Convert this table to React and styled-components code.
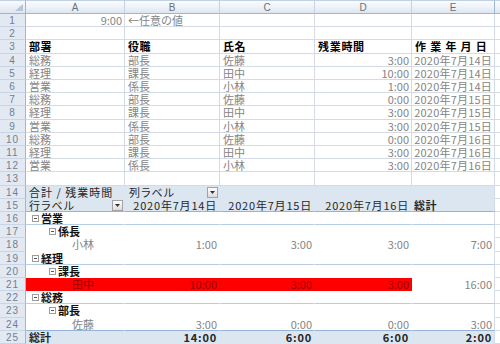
import React from 'react';
import styled, { createGlobalStyle } from 'styled-components';

const GRID = '#d4dbe6';
const PBLUE = '#dce6f1';
const PLINE = '#95b3d7';
const PLINE2 = '#b8cce4';
const RED = '#ff0000';
const WHITE = '#ffffff';

const ROW_HEIGHTS = Array.from(
  { length: 25 },
  (_, i) => Math.round((i + 1) * 13.2) - Math.round(i * 13.2)
);

const GlobalStyle = createGlobalStyle`
  html, body { margin: 0; padding: 0; background: #fff; }
  body { font-family: "Noto Sans CJK JP", "Noto Sans", sans-serif; overflow: hidden; }
`;

const Sheet = styled.div`
  display: grid;
  grid-template-columns: 26px 99px 95px 95px 97px 83px 1fr;
  grid-template-rows: 14px ${ROW_HEIGHTS.map((h) => `${h}px`).join(' ')};
  width: 500px;
  height: 344px;
  overflow: hidden;
  background: #fff;
`;

const Corner = styled.div`
  box-sizing: border-box;
  display: flex;
  align-items: flex-end;
  justify-content: flex-end;
  padding: 0 2px 2px 0;
  background: linear-gradient(#f8fafd, #dfe6f0);
  border-top: 1px solid #c3d0df;
  border-right: 1px solid #9eb6ce;
  border-bottom: 1px solid #9eb6ce;
`;

const ColHead = styled.div`
  box-sizing: border-box;
  display: flex;
  align-items: center;
  justify-content: center;
  background: linear-gradient(#f9fbfe 0%, #eef3f9 50%, #dde5f0 100%);
  border-top: 1px solid #c3d0df;
  border-right: 1px solid ${(p) => (p.$last ? '#9eb6ce' : '#c5d2e3')};
  border-bottom: 1px solid #9eb6ce;
  font: 10px "Liberation Sans", Arial, sans-serif;
  color: #707070;
`;

const RowHead = styled.div`
  box-sizing: border-box;
  display: flex;
  align-items: center;
  justify-content: center;
  background: #e2e9f3;
  border-right: 1px solid #9eb6ce;
  border-bottom: 1px solid #c9d5e4;
  font: 10px "Liberation Sans", Arial, sans-serif;
  letter-spacing: 1px;
  color: #71808f;
`;

const Cell = styled.div`
  box-sizing: border-box;
  display: flex;
  align-items: center;
  justify-content: ${(p) => (p.$align === 'right' ? 'flex-end' : 'flex-start')};
  padding: 0 ${(p) => p.$pr ?? 2}px 0 ${(p) => p.$indent ?? 3}px;
  background: ${(p) => p.$fill || WHITE};
  border-right: 1px solid ${(p) => p.$rc || GRID};
  border-bottom: 1px solid ${(p) => p.$bc || GRID};
  font-size: ${(p) => p.$size || 11}px;
  font-weight: ${(p) => (p.$bold ? 700 : 400)};
  color: ${(p) => p.$color || '#858585'};
  letter-spacing: ${(p) => p.$ls ?? 0}px;
  white-space: nowrap;
  line-height: 1;
  min-width: 0;
`;

const Label = styled.span`
  font-feature-settings: "palt";
`;

const DropBtn = styled.span`
  box-sizing: border-box;
  margin-left: auto;
  width: 11px;
  height: 11px;
  display: flex;
  align-items: center;
  justify-content: center;
  border: 1px solid #a3a3a3;
  background: linear-gradient(#fdfdfd, #dcdcdc);
`;

const GroupLabel = styled.span`
  display: inline-flex;
  align-items: center;
  gap: 2px;
  font-weight: 700;
  color: #111;
`;

const Triangle = () => (
  <svg width="8" height="7" viewBox="0 0 8 7">
    <path d="M8 0V7H0Z" fill="#b6c4d6" />
  </svg>
);

const Drop = () => (
  <DropBtn>
    <svg width="5" height="3" viewBox="0 0 5 3">
      <path d="M0 0h5L2.5 3z" fill="#333" />
    </svg>
  </DropBtn>
);

const Toggle = () => (
  <svg width="7" height="7" viewBox="0 0 7 7">
    <rect x="0.5" y="0.5" width="6" height="6" fill="#fff" stroke="#9c9c9c" />
    <path d="M2 3.5h3" stroke="#555" />
  </svg>
);

const group = (text) => (
  <GroupLabel>
    <Toggle />
    {text}
  </GroupLabel>
);

const COLS = ['A', 'B', 'C', 'D', 'E', ''];
const R = 'right';

const header = (t, ls = 0.5) => ({ t, bold: true, color: '#000', ls });
const dataRow = (a, b, c, d, e) => [
  { t: a },
  { t: b },
  { t: c },
  { t: d, align: R },
  { t: e, align: R, ls: 0.2 },
];

// pivot row: row-level fill and bottom line, cells A-E
const pv = (cells, fill = WHITE, bc = WHITE) =>
  [0, 1, 2, 3, 4].map((i) => {
    const c = cells[i] || {};
    const f = c.fill || fill;
    return {
      ...c,
      fill: f,
      rc: i === 4 ? GRID : f,
      bc: c.bc || bc,
    };
  });

const HEAD_COLOR = '#262626';
const DARK_RED = '#990000';
const ph = (t, extra = {}) => ({ t, size: 11, color: HEAD_COLOR, ls: 1, ...extra });

const ROWS = [
  [{ t: '9:00', align: R }, { t: '←任意の値' }],
  [],
  [header('部署'), header('役職'), header('氏名'), header('残業時間', 0.7), header('作業年月日', 4.2)],
  dataRow('総務', '部長', '佐藤', '3:00', '2020年7月14日'),
  dataRow('経理', '課長', '田中', '10:00', '2020年7月14日'),
  dataRow('営業', '係長', '小林', '1:00', '2020年7月14日'),
  dataRow('総務', '部長', '佐藤', '0:00', '2020年7月15日'),
  dataRow('経理', '課長', '田中', '3:00', '2020年7月15日'),
  dataRow('営業', '係長', '小林', '3:00', '2020年7月15日'),
  dataRow('総務', '部長', '佐藤', '0:00', '2020年7月16日'),
  dataRow('経理', '課長', '田中', '3:00', '2020年7月16日'),
  dataRow('営業', '係長', '小林', '3:00', '2020年7月16日'),
  [],
  pv(
    [
      ph(<Label>合計 / 残業時間</Label>),
      ph(<><Label>列ラベル</Label><Drop /></>, { pr: 1, indent: 4 }),
    ],
    PBLUE,
    PBLUE
  ),
  pv(
    [
      ph(<><Label>行ラベル</Label><Drop /></>, { pr: 1 }),
      ph('2020年7月14日', { align: R, ls: 0.8 }),
      ph('2020年7月15日', { align: R, ls: 0.8 }),
      ph('2020年7月16日', { align: R, ls: 0.8 }),
      ph('総計', { bold: true, indent: 2, ls: 0.5 }),
    ],
    PBLUE,
    PLINE
  ),
  pv([{ t: group('営業'), indent: 6 }], WHITE, PLINE2),
  pv([{ t: group('係長'), indent: 23 }]),
  pv([
    { t: '小林', indent: 46 },
    { t: '1:00', align: R },
    { t: '3:00', align: R },
    { t: '3:00', align: R },
    { t: '7:00', align: R },
  ]),
  pv([{ t: group('経理'), indent: 6 }], WHITE, PLINE2),
  pv([{ t: group('課長'), indent: 23 }]),
  pv([
    { t: '田中', indent: 46, fill: RED, bc: RED, color: DARK_RED },
    { t: '10:00', align: R, fill: RED, bc: RED, color: DARK_RED },
    { t: '3:00', align: R, fill: RED, bc: RED, color: DARK_RED },
    { t: '3:00', align: R, fill: RED, bc: RED, color: DARK_RED },
    { t: '16:00', align: R },
  ]),
  pv([{ t: group('総務'), indent: 6 }], WHITE, PLINE2),
  pv([{ t: group('部長'), indent: 23 }]),
  pv(
    [
      { t: '佐藤', indent: 46 },
      { t: '3:00', align: R },
      { t: '0:00', align: R },
      { t: '0:00', align: R },
      { t: '3:00', align: R },
    ],
    WHITE,
    PLINE
  ),
  pv(
    [
      { t: '総計', bold: true, color: HEAD_COLOR },
      { t: '14:00', align: R, bold: true, color: HEAD_COLOR, ls: 0.8 },
      { t: '6:00', align: R, bold: true, color: HEAD_COLOR, ls: 0.8 },
      { t: '6:00', align: R, bold: true, color: HEAD_COLOR, ls: 0.8 },
      { t: '2:00', align: R, bold: true, color: HEAD_COLOR, ls: 0.8 },
    ],
    PBLUE,
    PBLUE
  ),
];

export default function App() {
  return (
    <>
      <GlobalStyle />
      <Sheet>
        <Corner>
          <Triangle />
        </Corner>
        {COLS.map((c, i) => (
          <ColHead key={i} $last={i === 4}>
            {c}
          </ColHead>
        ))}
        {ROWS.map((cells, ri) => (
          <React.Fragment key={ri}>
            <RowHead>{ri + 1}</RowHead>
            {COLS.map((_, ci) => {
              const c = cells[ci] || {};
              return (
                <Cell
                  key={ci}
                  $align={c.align}
                  $bold={c.bold}
                  $color={c.color}
                  $size={c.size}
                  $ls={c.ls}
                  $fill={c.fill}
                  $rc={c.rc}
                  $bc={c.bc}
                  $indent={c.indent}
                  $pr={c.pr}
                >
                  {c.t}
                </Cell>
              );
            })}
          </React.Fragment>
        ))}
      </Sheet>
    </>
  );
}
